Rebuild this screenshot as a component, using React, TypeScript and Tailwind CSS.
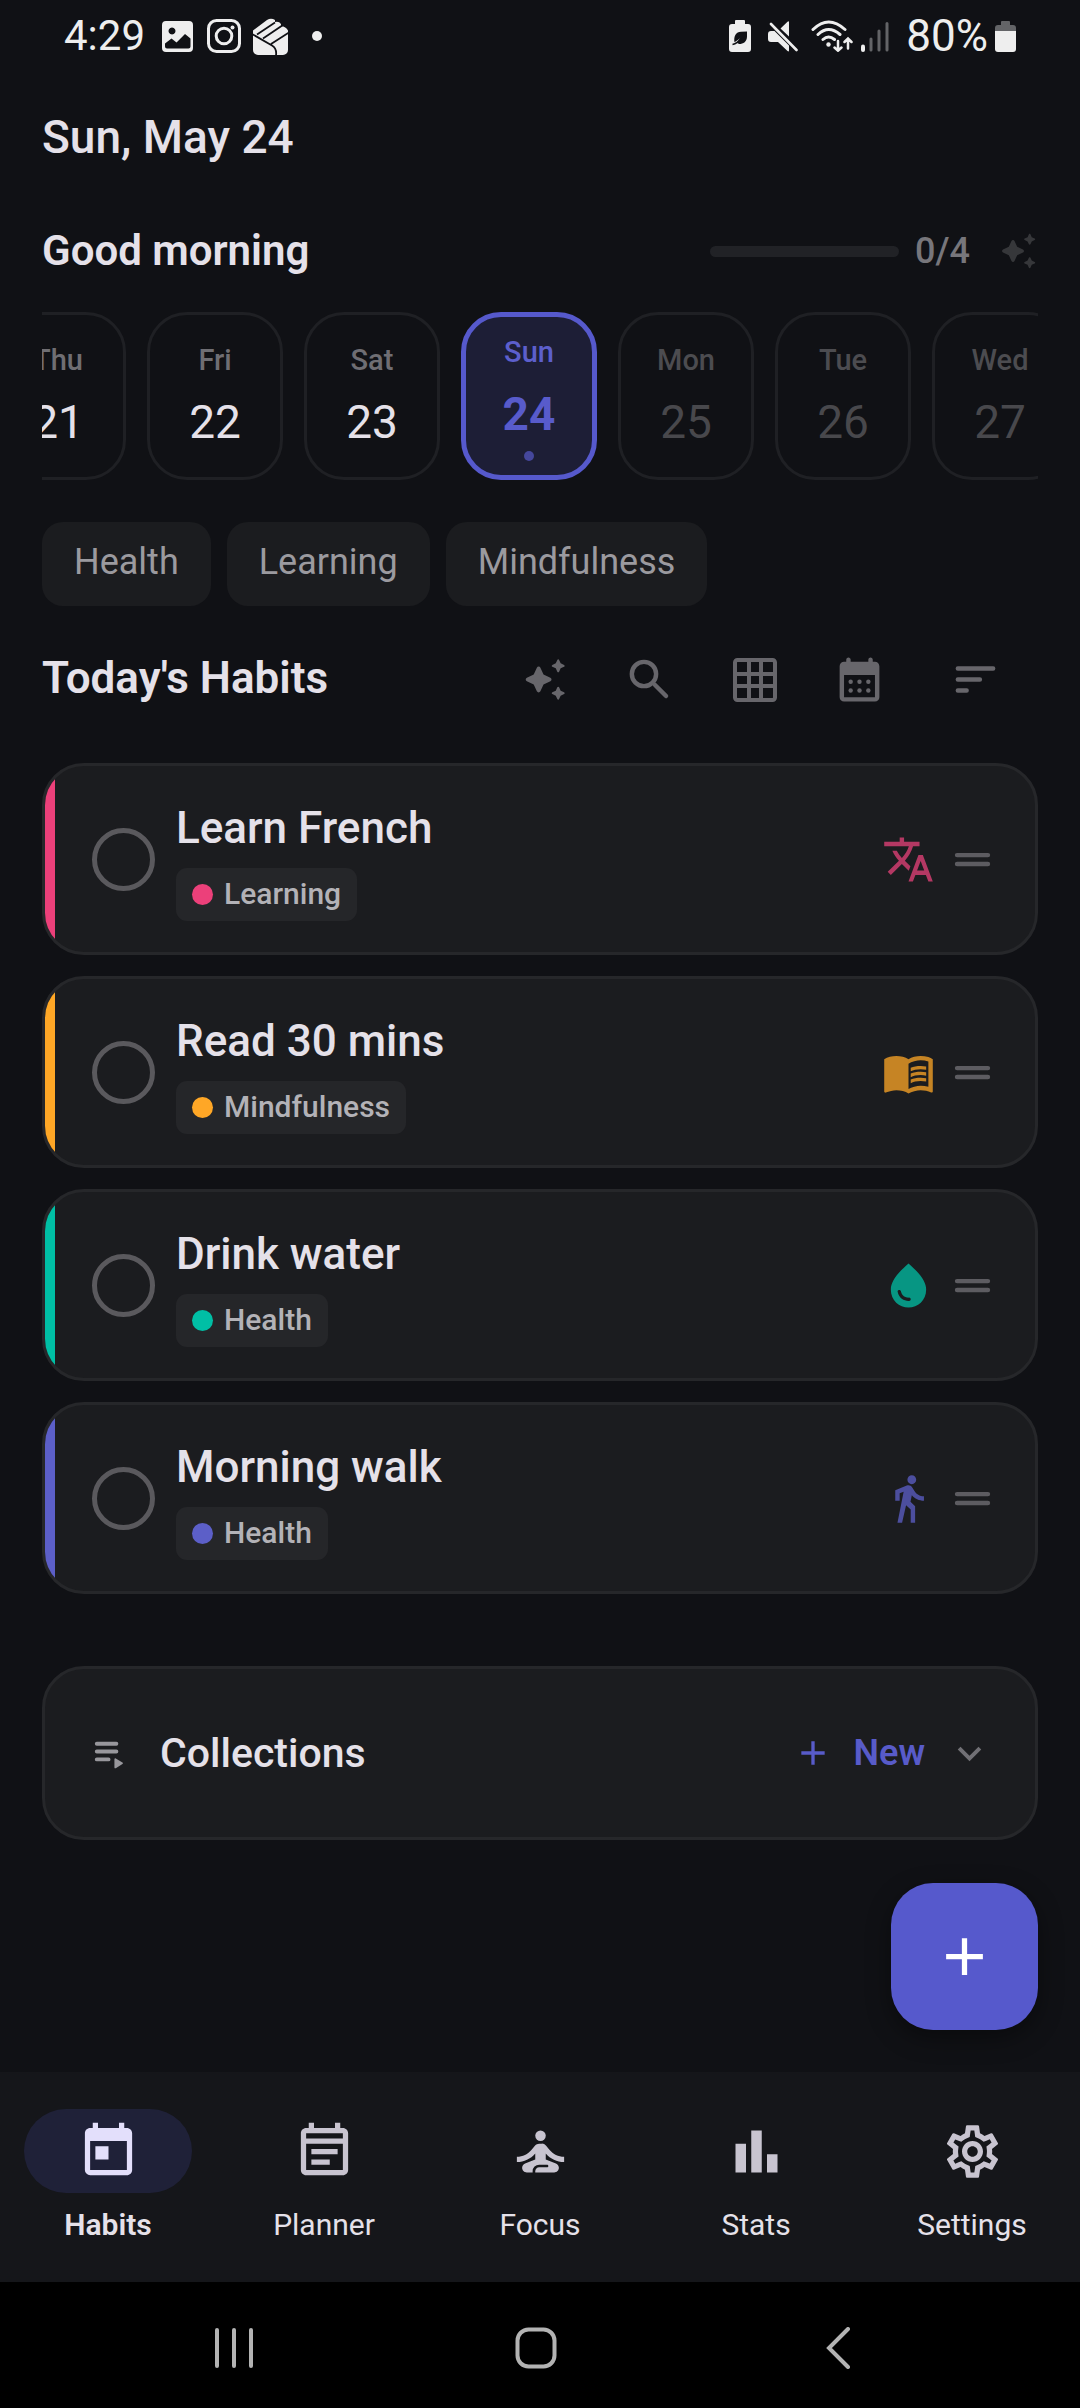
import { useState } from 'react';
import type { ReactNode } from 'react';
import {
  MdAdd,
  MdBarChart,
  MdDirectionsWalk,
  MdExpandMore,
  MdMenuBook,
  MdOutlineEventNote,
  MdOutlineSettings,
  MdSelfImprovement,
  MdToday,
  MdTranslate,
  MdWaterDrop,
} from 'react-icons/md';

const days = [
  { name: 'Thu', date: 21, state: 'past' },
  { name: 'Fri', date: 22, state: 'past' },
  { name: 'Sat', date: 23, state: 'past' },
  { name: 'Sun', date: 24, state: 'today' },
  { name: 'Mon', date: 25, state: 'future' },
  { name: 'Tue', date: 26, state: 'future' },
  { name: 'Wed', date: 27, state: 'future' },
];

const categories = ['Health', 'Learning', 'Mindfulness'];

const habits = [
  {
    id: 'french',
    title: 'Learn French',
    category: 'Learning',
    color: 'bg-[#ec407a]',
    iconColor: 'text-[#b43863]',
    icon: MdTranslate,
  },
  {
    id: 'read',
    title: 'Read 30 mins',
    category: 'Mindfulness',
    color: 'bg-[#ffa726]',
    iconColor: 'text-[#c68424]',
    icon: MdMenuBook,
  },
  {
    id: 'water',
    title: 'Drink water',
    category: 'Health',
    color: 'bg-[#00bfa5]',
    iconColor: 'text-[#079683]',
    icon: MdWaterDrop,
  },
  {
    id: 'walk',
    title: 'Morning walk',
    category: 'Health',
    color: 'bg-[#5c5fc8]',
    iconColor: 'text-[#4c4e9e]',
    icon: MdDirectionsWalk,
  },
];

const tabs = [
  { label: 'Habits', icon: MdToday },
  { label: 'Planner', icon: MdOutlineEventNote },
  { label: 'Focus', icon: MdSelfImprovement },
  { label: 'Stats', icon: MdBarChart },
  { label: 'Settings', icon: MdOutlineSettings },
];

function SparkleIcon({ className }: { className: string }) {
  return (
    <svg viewBox="0 0 24 24" fill="currentColor" className={className}>
      <path d="M19.46 8l.79-1.75L22 5.46c.39-.18.39-.73 0-.91l-1.75-.79L19.46 2c-.18-.39-.73-.39-.91 0l-.79 1.75-1.76.79c-.39.18-.39.73 0 .91l1.75.79.79 1.76c.18.39.74.39.92 0zM11.5 9.5L9.91 6c-.35-.78-1.47-.78-1.82 0L6.5 9.5 3 11.09c-.78.36-.78 1.47 0 1.82l3.5 1.59L8.09 18c.36.78 1.47.78 1.82 0l1.59-3.5 3.5-1.59c.78-.36.78-1.47 0-1.82L11.5 9.5zm7.04 6.5l-.79 1.75-1.75.79c-.39.18-.39.73 0 .91l1.75.79.79 1.76c.18.39.73.39.91 0l.79-1.75 1.76-.79c.39-.18.39-.73 0-.91l-1.75-.79-.79-1.76c-.18-.39-.74-.39-.92 0z" />
    </svg>
  );
}

function SearchIcon({ className }: { className: string }) {
  return (
    <svg
      viewBox="0 0 24 24"
      fill="none"
      stroke="currentColor"
      strokeWidth="2"
      strokeLinecap="round"
      className={className}
    >
      <circle cx="9.5" cy="9.5" r="5.5" />
      <path d="M14.4 14.4l5.1 5.1" />
    </svg>
  );
}

function GridIcon({ className }: { className: string }) {
  return (
    <svg
      viewBox="0 0 24 24"
      fill="none"
      stroke="currentColor"
      strokeWidth="2"
      className={className}
    >
      <rect x="2" y="2" width="20" height="20" rx="1.2" />
      <path d="M9 2v20M15 2v20M2 9h20M2 15h20" />
    </svg>
  );
}

function CalendarIcon({ className }: { className: string }) {
  return (
    <svg viewBox="0 0 24 24" fill="currentColor" className={className}>
      <path
        fillRule="evenodd"
        d="M17 2c-.55 0-1 .45-1 1v1H8V3c0-.55-.45-1-1-1s-1 .45-1 1v1H5c-1.11 0-1.99.9-1.99 2L3 20c0 1.1.89 2 2 2h14c1.1 0 2-.9 2-2V6c0-1.1-.9-2-2-2h-1V3c0-.55-.45-1-1-1zm2 18H5V10h14v10z"
      />
      <circle cx="8" cy="13" r="1" />
      <circle cx="12" cy="13" r="1" />
      <circle cx="16" cy="13" r="1" />
      <circle cx="8" cy="17" r="1" />
      <circle cx="12" cy="17" r="1" />
      <circle cx="16" cy="17" r="1" />
    </svg>
  );
}

function SortIcon({ className }: { className: string }) {
  return (
    <svg
      viewBox="0 0 24 24"
      fill="none"
      stroke="currentColor"
      strokeWidth="2"
      strokeLinecap="round"
      className={className}
    >
      <path d="M4 7h16M4 12h10M4 17h4" />
    </svg>
  );
}

function DragIcon({ className }: { className: string }) {
  return (
    <svg
      viewBox="0 0 24 24"
      fill="none"
      stroke="currentColor"
      strokeWidth="2"
      strokeLinecap="round"
      className={className}
    >
      <path d="M5 10h14M5 14h14" />
    </svg>
  );
}

function PlaylistIcon({ className }: { className: string }) {
  return (
    <svg viewBox="0 0 24 24" className={className}>
      <path
        d="M5 7h10M5 11h10M5 15h6"
        fill="none"
        stroke="currentColor"
        strokeWidth="2"
        strokeLinecap="round"
      />
      <path
        d="M14 14.900v4.200c0 .4.4.6.7.4l3.400-2.100c.3-.2.3-.6 0-.8l-3.400-2.100c-.3-.2-.7 0-.7.4z"
        fill="currentColor"
      />
    </svg>
  );
}

function StatusBar() {
  return (
    <header className="flex h-[72px] items-center justify-between px-16 text-[42px] leading-[48px] text-[#eeeeee]">
      <div className="flex items-center">
        <span>4:29</span>
        <svg viewBox="0 0 31 31" className="ml-[17px] size-[31px]">
          <path
            fill="currentColor"
            fillRule="evenodd"
            d="M4 0h23a4 4 0 0 1 4 4v23a4 4 0 0 1-4 4H4a4 4 0 0 1-4-4V4a4 4 0 0 1 4-4zM10 6.500a3.500 3.500 0 1 0 .01 0zM3 22.500V25.500a2 2 0 0 0 2 2H26.500a2 2 0 0 0 2-2V17.500L23 13l-8.500 8.500-5-4z"
          />
        </svg>
        <svg
          viewBox="0 0 34 34"
          fill="none"
          stroke="currentColor"
          strokeWidth="3"
          className="ml-[14px] size-[34px]"
        >
          <rect x="1.500" y="1.500" width="31" height="31" rx="8" />
          <circle cx="17" cy="17" r="7.800" />
          <circle cx="25.500" cy="8.500" r="2" fill="currentColor" stroke="none" />
        </svg>
        <svg viewBox="0 0 37 37" className="ml-[11px] size-[37px]">
          <path
            fill="currentColor"
            d="M1 17V12.500L15 2q4-2.500 8 0v2q4-1 6 2v2q5 .500 7 4.500V32a5 5 0 0 1-5 5H6a5 5 0 0 1-5-5z"
          />
          <path
            d="M0 16l20 11.500q5 3 4 10M5 16.500L23 4.500M11 20.500L31 7M19 26L37 14.500"
            fill="none"
            stroke="#101115"
            strokeWidth="1.800"
          />
        </svg>
        <span className="ml-[23px] size-2.5 rounded-full bg-[#eeeeee]" />
      </div>
      <div className="flex items-center">
        <svg viewBox="0 0 22 32" className="h-[32px] w-[22px]">
          <path
            fill="currentColor"
            d="M7 0h8a1 1 0 0 1 1 1v3h3a3 3 0 0 1 3 3v22a3 3 0 0 1-3 3H3a3 3 0 0 1-3-3V7a3 3 0 0 1 3-3h3V1a1 1 0 0 1 1-1z"
          />
          <path
            fill="#101115"
            d="M18 11.500v5c0 5-3.500 7.500-8 7.500l-2-1.200 4-5-6.500 4.500C4.500 16 7 12 12 11.800z"
          />
          <path d="M3.500 24.500q5-.8 8.500-6.500" fill="none" stroke="#101115" strokeWidth="1.500" />
        </svg>
        <svg viewBox="0 0 30 31" className="ml-[17px] h-[31px] w-[30px]">
          <path
            fill="currentColor"
            d="M21 1v14.500L12.500 7.500 19.500.8q1.500-1 1.500.2zM0 13a3 3 0 0 1 3-3h3.500L21 24.500V29.500q0 1.500-1.500.6L10 21H3a3 3 0 0 1-3-3z"
          />
          <path
            d="M3 3l25.500 26"
            stroke="currentColor"
            strokeWidth="2.600"
            strokeLinecap="round"
          />
        </svg>
        <svg
          viewBox="0 0 42 32"
          fill="none"
          stroke="currentColor"
          strokeWidth="3"
          strokeLinecap="round"
          className="ml-[13px] h-[32px] w-[42px]"
        >
          <path d="M2 9.500q15.500-15 32 0M7 14.500q10.500-10 22 0M12 19.500q5.500-5 11.500 0" />
          <circle cx="17.500" cy="24.500" r="2.200" fill="currentColor" stroke="none" />
          <path strokeWidth="2.500" d="M27 21v9.500M23.500 27.500l3.500 3.200 3.500-3.200M37 28.500V18.500M33.500 22l3.500-3.500 3.500 3.500" />
        </svg>
        <svg
          viewBox="0 0 28 31"
          fill="none"
          stroke="#636467"
          strokeWidth="3"
          strokeLinecap="round"
          className="ml-[8px] h-[31px] w-[28px]"
        >
          <path d="M2 25.500v3.500" stroke="currentColor" strokeWidth="4" />
          <path d="M10 18v11M18 10v19M26 2.500v26.500" />
        </svg>
        <span className="ml-[17px] text-[44px]">80%</span>
        <svg viewBox="0 0 21 31" className="ml-[7px] h-[31px] w-[21px]">
          <path
            fill="#636467"
            d="M7 0h7a1 1 0 0 1 1 1v3h3a3 3 0 0 1 3 3v4H0V7a3 3 0 0 1 3-3h3V1a1 1 0 0 1 1-1z"
          />
          <path fill="currentColor" d="M0 10h21v18a3 3 0 0 1-3 3H3a3 3 0 0 1-3-3z" />
        </svg>
      </div>
    </header>
  );
}

function DayCard({ day }: { day: (typeof days)[number] }) {
  const today = day.state === 'today';
  const future = day.state === 'future';

  return (
    <button
      type="button"
      className={`flex h-[168px] w-34 shrink-0 flex-col items-center justify-center rounded-[40px] ${
        today ? 'border-5 border-[#5659cc] bg-[#1d1e36]' : 'border-3 border-[#1f2024]'
      }`}
    >
      <span
        className={`text-[29px] leading-[40px] font-medium ${
          today ? 'text-[#5c5fcc]' : future ? 'text-[#4c4c50]' : 'text-[#6f6e73]'
        }`}
      >
        {day.name}
      </span>
      <span
        className={`mt-[11px] text-[46px] leading-[62px] ${
          today
            ? 'font-bold text-[#585bcb]'
            : future
              ? 'text-[#48484c]'
              : 'text-[#e5e1e9]'
        }`}
      >
        {day.date}
      </span>
      {today && <span className="mt-1.5 size-2.5 rounded-full bg-[#45479c]" />}
    </button>
  );
}

function ToolButton({ label, children }: { label: string; children: ReactNode }) {
  return (
    <button
      type="button"
      aria-label={label}
      className="flex h-[105px] w-[105px] items-center justify-center last:w-[126px]"
    >
      {children}
    </button>
  );
}

function HabitCard({ habit }: { habit: (typeof habits)[number] }) {
  const [done, setDone] = useState(false);
  const Icon = habit.icon;

  return (
    <li className="flex h-[192px] items-center overflow-hidden rounded-[42px] border-3 border-[#26272a] bg-[#1b1c1f] pr-9">
      <span className={`h-full w-2.5 ${habit.color}`} />
      <input
        type="checkbox"
        id={habit.id}
        checked={done}
        onChange={() => setDone(!done)}
        className="ml-[37px] size-[63px] appearance-none rounded-full border-5 border-[#5a595d] checked:bg-[#5a595d]"
      />
      <div className="ml-[21px] flex flex-1 flex-col items-start pt-0.5">
        <label
          htmlFor={habit.id}
          className="text-[44px] leading-[56px] font-medium text-[#e5e1e9]"
        >
          {habit.title}
        </label>
        <span className="mt-3 flex h-[53px] items-center gap-[11px] rounded-[11px] bg-[#252629] px-4 text-[30px] leading-[36px] font-medium text-[#b3b2b7]">
          <span className={`size-[21px] rounded-full ${habit.color}`} />
          {habit.category}
        </span>
      </div>
      <Icon className={`size-[53px] ${habit.iconColor}`} />
      <button type="button" aria-label={`Reorder ${habit.title}`} className="ml-[11px]">
        <DragIcon className="size-[53px] text-[#5d5c61]" />
      </button>
    </li>
  );
}

export default function App() {
  const [tab, setTab] = useState('Habits');

  return (
    <div className="flex min-h-screen flex-col bg-[#101115] font-[Roboto,sans-serif] text-[#e5e1e9]">
      <StatusBar />

      <main className="relative flex-1 px-[42px] pt-[37px]">
        <h1 className="text-[46px] leading-[56px] font-medium">Sun, May 24</h1>

        <div className="mt-[62px] flex h-12 items-center">
          <p className="flex-1 text-[42px] leading-[48px] font-semibold">Good morning</p>
          <div
            role="progressbar"
            aria-label="Habits done"
            aria-valuenow={0}
            aria-valuemax={4}
            className="h-[11px] w-[189px] rounded-full bg-[#212226]"
          />
          <span className="ml-4 text-[36px] leading-[48px] font-medium text-[#77767b]">
            0/4
          </span>
          <SparkleIcon className="ml-7 size-10 text-[#36373a]" />
        </div>

        <div className="mt-[37px] overflow-hidden">
          <div className="-ml-13 flex gap-[21px]">
            {days.map((day) => (
              <DayCard key={day.date} day={day} />
            ))}
          </div>
        </div>

        <div className="mt-[42px] flex gap-4">
          {categories.map((category) => (
            <button
              key={category}
              type="button"
              className="h-[84px] rounded-[21px] bg-[#1b1c1f] px-8 pb-1 text-[36px] leading-[48px] text-[#9b9a9f]"
            >
              {category}
            </button>
          ))}
        </div>

        <div className="mt-[21px] flex items-center">
          <h2 className="flex-1 pb-1 text-[44px] leading-[48px] font-semibold">
            Today's Habits
          </h2>
          <div className="flex text-[#67666b]">
            <ToolButton label="Suggestions">
              <SparkleIcon className="size-[47px]" />
            </ToolButton>
            <ToolButton label="Search">
              <SearchIcon className="size-[53px]" />
            </ToolButton>
            <ToolButton label="Grid view">
              <GridIcon className="size-[48px]" />
            </ToolButton>
            <ToolButton label="Calendar">
              <CalendarIcon className="size-[53px]" />
            </ToolButton>
            <ToolButton label="Sort">
              <SortIcon className="size-[53px]" />
            </ToolButton>
          </div>
        </div>

        <ul className="mt-[31px] flex flex-col gap-[21px]">
          {habits.map((habit) => (
            <HabitCard key={habit.id} habit={habit} />
          ))}
        </ul>

        <section className="mt-[72px] flex h-[174px] items-center rounded-[42px] border-3 border-[#26272a] bg-[#1b1c1f] px-[42px]">
          <PlaylistIcon className="size-[47px] text-[#98979c]" />
          <h2 className="ml-[26px] flex-1 text-[41px] leading-[48px] font-medium">
            Collections
          </h2>
          <button
            type="button"
            className="flex items-center gap-[21px] text-[36px] leading-[48px] font-semibold text-[#585bc9]"
          >
            <MdAdd className="size-10" />
            New
          </button>
          <button type="button" aria-label="Expand collections" className="ml-[21px]">
            <MdExpandMore className="size-[47px] text-[#717075]" />
          </button>
        </section>

        <button
          type="button"
          aria-label="Add habit"
          className="absolute right-[42px] bottom-[42px] flex size-[147px] items-center justify-center rounded-[42px] bg-[#5659cc] text-white shadow-[0_8px_24px_rgba(0,0,0,0.4)]"
        >
          <MdAdd className="size-[63px]" />
        </button>
      </main>

      <nav className="grid h-[210px] grid-cols-5 bg-[#15161a] pt-[37px]">
        {tabs.map(({ label, icon: Icon }) => (
          <button
            key={label}
            type="button"
            onClick={() => setTab(label)}
            className="flex flex-col items-center"
          >
            <span
              className={`flex h-[84px] w-[168px] items-center justify-center rounded-full ${
                tab === label ? 'bg-[#1f2138] text-[#e3dffb]' : 'text-[#c8c4d0]'
              }`}
            >
              <Icon className="size-[63px]" />
            </span>
            <span
              className={`mt-3 text-[30px] leading-[40px] ${
                tab === label ? 'font-semibold' : 'font-normal'
              }`}
            >
              {label}
            </span>
          </button>
        ))}
      </nav>

      <footer className="flex h-[126px] justify-center bg-black pt-1.5 pr-2 text-[#b3b3b3]">
        <button type="button" aria-label="Recents" className="flex w-[302px] items-center justify-center">
          <svg
            viewBox="0 0 42 42"
            stroke="currentColor"
            strokeWidth="4"
            strokeLinecap="round"
            className="size-[42px]"
          >
            <path d="M4 3v36M21 3v36M38 3v36" />
          </svg>
        </button>
        <button type="button" aria-label="Home" className="flex w-[302px] items-center justify-center">
          <svg
            viewBox="0 0 42 42"
            fill="none"
            stroke="currentColor"
            strokeWidth="4"
            className="size-[42px]"
          >
            <rect x="2.500" y="2.500" width="37" height="37" rx="11" />
          </svg>
        </button>
        <button type="button" aria-label="Back" className="flex w-[302px] items-center justify-center">
          <svg
            viewBox="0 0 42 42"
            fill="none"
            stroke="currentColor"
            strokeWidth="4"
            strokeLinecap="round"
            className="size-[42px]"
          >
            <path d="M31 2L12 21l19 19" />
          </svg>
        </button>
      </footer>
    </div>
  );
}
